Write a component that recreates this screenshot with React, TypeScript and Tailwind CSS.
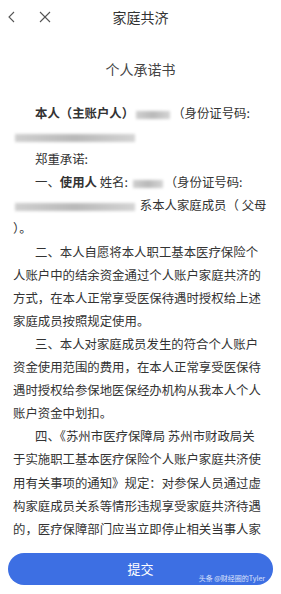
import React from "react"

const cjk = { fontFamily: '"Noto Sans CJK SC", "Noto Sans", sans-serif' }

function Blur({ w }: { w: number }) {
  return (
    <span
      className="inline-block h-[8px] align-middle bg-gradient-to-r from-[#cfcfcf] via-[#b9b9b9] to-[#d4d4d4] blur-[1.5px] mx-[2px]"
      style={{ width: w }}
    />
  )
}

const Line = ({ children, indent }: { children: React.ReactNode; indent?: boolean }) => (
  <div className={`whitespace-nowrap ${indent ? "pl-[22px]" : ""}`}>{children}</div>
)

export default function App() {
  return (
    <div
      className="w-[281px] h-[594px] overflow-hidden bg-white flex flex-col text-[#333]"
      style={cjk}
    >
      {/* Header */}
      <div className="h-[34px] grid grid-cols-[1fr_auto_1fr] items-center px-[6px]">
        <div className="flex items-center gap-[22px]">
          <svg width="10" height="12" viewBox="0 0 10 12" className="ml-[1px]">
            <polyline points="7,1 2,6 7,11" fill="none" stroke="#555" strokeWidth="1.1" />
          </svg>
          <svg width="12" height="12" viewBox="0 0 12 12">
            <line x1="1" y1="1" x2="11" y2="11" stroke="#555" strokeWidth="1.1" />
            <line x1="11" y1="1" x2="1" y2="11" stroke="#555" strokeWidth="1.1" />
          </svg>
        </div>
        <div className="text-[14px] text-[#333]">家庭共济</div>
        <div />
      </div>

      {/* Title */}
      <div className="mt-[25px] text-center text-[14px] leading-[20px] text-[#444]">个人承诺书</div>

      {/* Body */}
      <div className="flex-1 overflow-hidden mt-[23px] pl-[13px] text-[12.4px] leading-[23.1px]">
        <Line indent>
          <span className="font-bold">本人（主账户人）</span>
          <Blur w={34} />
          （身份证号码:
        </Line>
        <Line>
          <Blur w={120} />
        </Line>
        <Line indent>郑重承诺:</Line>
        <Line indent>
          一、<span className="font-bold">使用人</span> 姓名: <Blur w={30} />
          （身份证号码:
        </Line>
        <Line>
          <Blur w={120} /> 系本人家庭成员（ 父母
        </Line>
        <Line>）。</Line>
        <Line indent>二、本人自愿将本人职工基本医疗保险个</Line>
        <Line>人账户中的结余资金通过个人账户家庭共济的</Line>
        <Line>方式，在本人正常享受医保待遇时授权给上述</Line>
        <Line>家庭成员按照规定使用。</Line>
        <Line indent>三、本人对家庭成员发生的符合个人账户</Line>
        <Line>资金使用范围的费用，在本人正常享受医保待</Line>
        <Line>遇时授权给参保地医保经办机构从我本人个人</Line>
        <Line>账户资金中划扣。</Line>
        <Line indent>四、《苏州市医疗保障局 苏州市财政局关</Line>
        <Line>于实施职工基本医疗保险个人账户家庭共济使</Line>
        <Line>用有关事项的通知》规定：对参保人员通过虚</Line>
        <Line>构家庭成员关系等情形违规享受家庭共济待遇</Line>
        <Line>的，医疗保障部门应当立即停止相关当事人家</Line>
      </div>

      {/* Submit */}
      <div className="px-[8px] pb-[9px] pt-[11px]">
        <button className="relative w-full h-[32px] rounded-full bg-[#3d6fe3] text-white text-[13px]">
          提交
          <span className="absolute right-[8px] bottom-[3px] text-[7px] leading-[8px] text-white/80">
            头条 @财经圈的Tyler
          </span>
        </button>
      </div>
    </div>
  )
}
